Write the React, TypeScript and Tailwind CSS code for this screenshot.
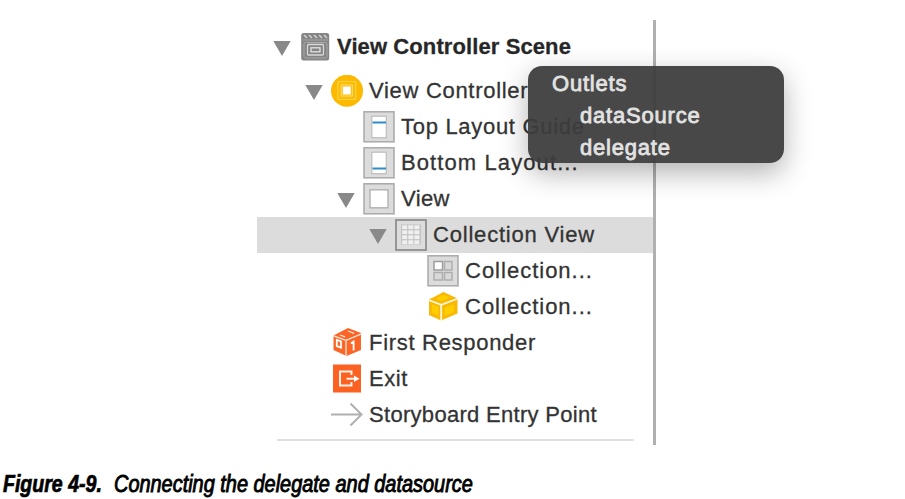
import type { ReactNode } from 'react';

const frame = (
  <rect x="1" y="0.8" width="30" height="30" fill="#dcdcdc" stroke="#a9a9a9" strokeWidth="1.5" />
);

function Svg({ children }: { children: ReactNode }) {
  return (
    <svg className="size-8 shrink-0" viewBox="0 0 32 32" fill="none">
      {children}
    </svg>
  );
}

const SceneIcon = () => (
  <Svg>
    <rect x="2.2" y="2" width="28" height="27.5" rx="2.5" fill="#858585" />
    <path d="M5 4l3 3M10 4l3 3M15 4l3 3M20 4l3 3M25 4l3 3" stroke="#cfcfcf" strokeWidth="1.6" />
    <path d="M4 9h25" stroke="#a5a5a5" strokeWidth="1" />
    <rect x="5" y="11.5" width="23" height="15.5" rx="1.5" stroke="#a9a9a9" strokeWidth="1" />
    <rect x="8.5" y="13.5" width="16" height="10.5" rx="1" stroke="#d8d8d8" strokeWidth="1.3" />
    <rect x="12" y="16.8" width="9" height="4" fill="#858585" stroke="#e4e4e4" strokeWidth="1.3" />
  </Svg>
);

const ControllerIcon = () => (
  <Svg>
    <circle cx="16" cy="15.7" r="16" fill="#fcb900" />
    <rect x="6.8" y="6.5" width="18" height="18" rx="1" fill="#fdbd05" stroke="#ffd348" strokeWidth="1.2" />
    <rect x="10.3" y="10" width="11" height="11" fill="#fcb900" stroke="#ffe07a" strokeWidth="1" />
    <rect x="11.8" y="11.5" width="8" height="8" fill="#fff" />
  </Svg>
);

const GuideIcon = ({ bottom }: { bottom?: boolean }) => (
  <Svg>
    {frame}
    <rect x="8.8" y="5.2" width="14.5" height="21.5" fill="#fff" stroke="#bdbdbd" strokeWidth="1.2" />
    <path d={bottom ? 'M9.5 21.5h13.5' : 'M9.5 11.5h13.5'} stroke="#2f8cc8" strokeWidth="2" />
  </Svg>
);

const ViewIcon = () => (
  <Svg>
    {frame}
    <rect x="7" y="6.8" width="18" height="18" fill="#fff" stroke="#b5b5b5" strokeWidth="1.5" />
  </Svg>
);

const CollectionIcon = () => (
  <Svg>
    <rect x="1" y="1" width="30" height="30" fill="#dcdcdc" stroke="#8e8e8e" strokeWidth="1.8" />
    <rect x="6" y="5.5" width="20" height="20" fill="#c4c4c4" />
    {[6.3, 11.3, 16.3, 21.3].map((y) =>
      [7.2, 13.3, 19.4].map((x) => <rect key={`${x}-${y}`} x={x} y={y} width="5" height="3.8" fill="#f0f0f0" />),
    )}
  </Svg>
);

const CellIcon = () => (
  <Svg>
    {frame}
    <rect x="7" y="6.5" width="8.5" height="8.5" fill="#fff" stroke="#9c9c9c" strokeWidth="1.5" />
    <path d="M17.5 6.5h7.5v8.5h-7.5zM7 17.5h8.5V25H7zM17.5 17.5H25V25h-7.5z" fill="#d8d8d8" stroke="#adadad" strokeWidth="1.4" />
  </Svg>
);

const CubeIcon = () => (
  <Svg>
    <path d="M2 8.5L16.5 1 30.5 7.5v15L14 29.5 2 24z" fill="#f9b806" />
    <path d="M1.5 9l12.7 4.8L31 7.5M14.2 13.8V30" stroke="#fff8dc" strokeWidth="1.8" />
    <path d="M9 7.6l7.8-3.8 6.5 3-8.8 3.4zM5 13.5l6.5 2.3v9L5 21.5zM17.5 16.7l9.3-3.4v7.7l-9.3 4z" fill="#ffcd00" />
  </Svg>
);

const ResponderIcon = () => (
  <Svg>
    <path d="M2.5 8.5L17 1 30 6v17L15.5 29 2.5 23z" fill="#fb6526" />
    <path d="M2 8.6l13 4.7L30.5 6.8M15 13.3v16M9 8l5 1.8M17 4l6 2.4" stroke="#ffe6db" strokeWidth="1.3" />
    <path d="M5.8 12.8l4.2 1.5v6.4l-4.2-1.5zM20 16.5l2.6-2v9" stroke="#fff" strokeWidth="1.8" />
  </Svg>
);

const ExitIcon = () => (
  <Svg>
    <rect x="2" y="1.5" width="28" height="28" fill="#fb6120" />
    <path d="M20.5 12V8.5H9V22.5h11.5v-3.5" stroke="#fff0e8" strokeWidth="2" />
    <path d="M15.5 15.7h9" stroke="#fff" strokeWidth="1.8" />
    <path d="M23 12.5l5.5 3.2-5.5 3.2z" fill="#fff" />
  </Svg>
);

const EntryIcon = () => (
  <Svg>
    <path d="M0 15.5h30M19.5 4.5L30.5 15.5 19.5 26.5" stroke="#b0b0b0" strokeWidth="2" />
  </Svg>
);

type RowProps = {
  indent: string;
  icon: ReactNode;
  label: string;
  open?: boolean;
  text?: string;
  selected?: boolean;
};

function Row({ indent, icon, label, open, text = 'tracking-[0.7px]', selected }: RowProps) {
  return (
    <div className={`flex h-9 items-center whitespace-nowrap ${indent} ${selected ? 'bg-[#dcdcdc]' : ''}`}>
      <span className="flex w-8 shrink-0 justify-center pr-0.5">
        {open && (
          <svg className="mt-0.5 h-[15px] w-[18px]" viewBox="0 0 18 15">
            <path d="M0.3 0h17.4L9 15z" fill="#898989" />
          </svg>
        )}
      </span>
      {icon}
      <span className={`pb-0.5 pl-1.5 ${text}`}>{label}</span>
    </div>
  );
}

export default function App() {
  return (
    <main className="relative h-[499px] w-[905px] overflow-hidden bg-white font-['Liberation_Sans',Arial,sans-serif] text-[22px] text-[#333333] [-webkit-text-stroke:0.3px_#333333]">
      <section className="ml-[257px] pt-5">
        <div className="h-[425px] w-[399px] border-r-[3px] border-[#b0b0b0] pt-[9px]">
          <div className="mb-2">
            <Row indent="pl-[10px]" open icon={<SceneIcon />} label="View Controller Scene" text="font-bold tracking-[0.1px] text-[#262626]" />
          </div>
          <Row indent="pl-[42px]" open icon={<ControllerIcon />} label="View Controller" />
          <Row indent="pl-[74px]" icon={<GuideIcon />} label="Top Layout Guide" />
          <Row indent="pl-[74px]" icon={<GuideIcon bottom />} label="Bottom Layout..." text="tracking-[1.1px]" />
          <Row indent="pl-[74px]" open icon={<ViewIcon />} label="View" text="tracking-[0.4px]" />
          <Row indent="pl-[106px]" open selected icon={<CollectionIcon />} label="Collection View" text="tracking-[0.8px]" />
          <Row indent="pl-[138px]" icon={<CellIcon />} label="Collection..." text="tracking-[1px]" />
          <Row indent="pl-[138px]" icon={<CubeIcon />} label="Collection..." text="tracking-[1px]" />
          <Row indent="pl-[42px]" icon={<ResponderIcon />} label="First Responder" />
          <Row indent="pl-[42px]" icon={<ExitIcon />} label="Exit" text="tracking-[0.6px]" />
          <Row indent="pl-[42px]" icon={<EntryIcon />} label="Storyboard Entry Point" text="tracking-[0.3px]" />
          <div className="mt-[6px] ml-5 h-0.5 w-[357px] bg-[#dfdfdf]" />
        </div>
      </section>
      <p className="mt-[25px] ml-[3px] flex text-[23px] leading-7 whitespace-nowrap text-black italic">
        <span className="w-[111px] origin-left scale-x-[0.85] font-bold [-webkit-text-stroke:0.7px_#000]">Figure 4-9.</span>
        <span className="origin-left scale-x-[0.866] [-webkit-text-stroke:0.9px_#000]">Connecting the delegate and datasource</span>
      </p>
      <aside className="absolute top-[66px] left-[528px] h-[97px] w-[256px] rounded-[14px] bg-[#3d3d3d]/94 pt-0.5 pl-6 leading-8 tracking-[0.8px] text-[#e2e2e2] shadow-[0_10px_28px_rgba(0,0,0,0.3)] [-webkit-text-stroke:0.8px_#e2e2e2]">
        <div>Outlets</div>
        <div className="pl-7">dataSource</div>
        <div className="pl-7">delegate</div>
      </aside>
    </main>
  );
}
